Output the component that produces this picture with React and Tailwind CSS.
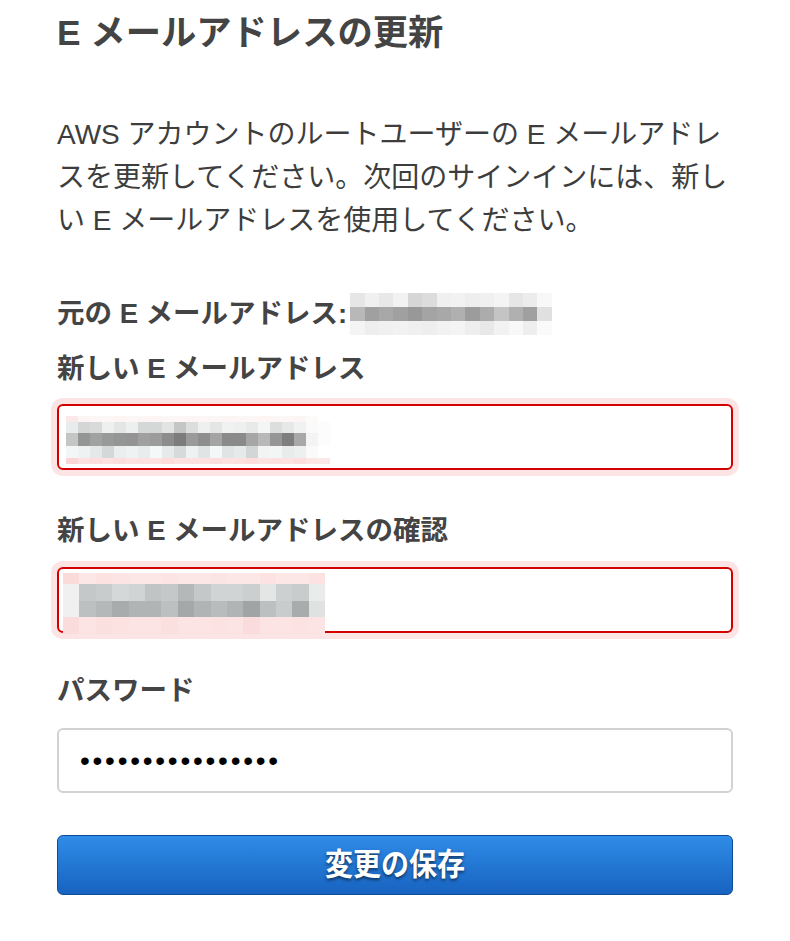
import { useState } from "react";

// pixelated stand-ins for the blurred addresses in the screenshot
const ORIG_ROWS = [
  ["#e6e6e6", "#f0f0f0", "#e8e8e8", "#f2f2f2", "#d6d6d6", "#dcdcdc", "#f0f0f0", "#f2f2f2", "#eeeeee", "#f0f0f0", "#f4f4f4", "#e6e6e6", "#ececec", "#f8f8f8"],
  ["#b8b8b8", "#a0a0a0", "#a8a8a8", "#a0a0a0", "#989898", "#a4a4a4", "#a8a8a8", "#b0b0b0", "#9c9c9c", "#acacac", "#c4c4c4", "#b0b0b0", "#a0a0a0", "#e0e0e0"],
  ["#f4f4f4", "#eeeeee", "#f0f0f0", "#f2f2f2", "#f0f0f0", "#eeeeee", "#f2f2f2", "#f4f4f4", "#eeeeee", "#e8e8e8", "#f2f2f2", "#f8f8f8", "#eeeeee", "#fafafa"],
];

const NEW_ROWS = [
  ["#fbe8e8", "#fdf4f4", "#fdf6f6", "#fdf6f6", "#fdf4f4", "#fdf6f6", "#fdf6f6", "#fdf4f4", "#fdf6f6", "#fdf6f6", "#fdf4f4", "#fdf6f6", "#fdf6f6", "#fdf4f4", "#fdf6f6", "#fdf6f6", "#fdf4f4", "#fdf6f6", "#fdf6f6", "#fdf4f4", "#fdfafa", "#ffffff"],
  ["#e8ecec", "#d4d6d6", "#d8dada", "#eef0f0", "#e4e6e6", "#eef0f0", "#d4d8d8", "#d6d8d8", "#e2e4e4", "#c4c6c6", "#dcdede", "#eef0f0", "#e4e6e6", "#f0f2f2", "#eef0f0", "#e8eaea", "#f4f6f6", "#dcdede", "#e6e8e8", "#f0f2f2", "#fafafa", "#fcfcfc"],
  ["#c4c6c6", "#949696", "#a0a2a2", "#989a9a", "#949696", "#949494", "#a0a0a0", "#9c9c9c", "#8c8c8c", "#7c7c7c", "#9a9a9a", "#8e8e8e", "#a4a4a4", "#8a8a8a", "#8a8a8a", "#a6a6a6", "#b8b8b8", "#969696", "#7e7e7e", "#a8a8a8", "#f4f4f4", "#fcfcfc"],
  ["#f2f6f6", "#eef2f2", "#e4e8e8", "#d4d8d8", "#eaeeee", "#eef2f2", "#e8ecec", "#f4f8f8", "#e6eaea", "#d6dada", "#eef2f2", "#e0e4e4", "#f4f8f8", "#e0e4e4", "#e6eaea", "#d2d6d6", "#f2f4f4", "#f4f6f6", "#e8ecec", "#eef0f0", "#fafafa", "#ffffff"],
  ["#fbd6d6", "#fde0e0", "#fddcdc", "#fde2e2", "#fddede", "#fde2e2", "#fde0e0", "#fde2e2", "#fddcdc", "#fde2e2", "#fde0e0", "#fde2e2", "#fddede", "#fde2e2", "#fde0e0", "#fddcdc", "#fde2e2", "#fde0e0", "#fde2e2", "#fddede", "#fde6e6", "#fde8e8"],
];

const CONFIRM_ROWS = [
  ["#fbdada", "#fde6e6", "#fde2e2", "#fde4e4", "#fde6e6", "#fde6e6", "#fde4e4", "#fde6e6", "#fde6e6", "#fde4e4", "#fde6e6", "#fde6e6", "#fde2e2", "#fde6e6", "#fde6e6", "#fde2e2"],
  ["#f0f0f0", "#c4c8c8", "#c8cccc", "#d4d8d8", "#d0d4d4", "#c0c4c4", "#c4c8c8", "#b4b8b8", "#c4c8c8", "#d0d4d4", "#d0d4d4", "#cccfcf", "#e4e6e6", "#ccd0d0", "#c8cccc", "#eaecec"],
  ["#f0f0f0", "#bcc0c0", "#b4b8b8", "#a8acac", "#b0b4b4", "#b0b4b4", "#bcc0c0", "#a4a8a8", "#b0b4b4", "#b8bcbc", "#b0b4b4", "#a0a4a4", "#bcc0c0", "#c8cccc", "#a8acac", "#e0e2e2"],
  ["#fbdcdc", "#fde4e4", "#fbe0e0", "#fde2e2", "#fde4e4", "#fde4e4", "#fbe0e0", "#fde4e4", "#fde4e4", "#fde2e2", "#fde4e4", "#fbdcdc", "#fde4e4", "#fde4e4", "#fde2e2", "#fde4e4"],
];

function Pixels({ rows, cell, heights }) {
  return (
    <div className="flex flex-col shrink-0">
      {rows.map((row, r) => (
        <div key={r} className="flex">
          {row.map((c, i) => (
            <div key={i} style={{ backgroundColor: c, width: cell, height: heights[r] }} />
          ))}
        </div>
      ))}
    </div>
  );
}

const Label = ({ children, className = "" }) => (
  <p className={`text-[27.5px] leading-[36px] font-bold text-[#444] ${className}`}>{children}</p>
);

export default function App() {
  const [pw, setPw] = useState("••••••••••••••••");

  return (
    <div
      className="min-h-screen bg-white px-[57px] text-[#444]"
      style={{ fontFamily: '"Liberation Sans", "Noto Sans CJK JP", sans-serif' }}
    >
      <h1 className="pt-[13px] text-[35.3px] leading-[40px] font-bold text-[#444]">E メールアドレスの更新</h1>

      <p className="mt-[60px] text-[28px] leading-[43px] text-[#3d3d3d]">
        AWS アカウントのルートユーザーの E メールアドレスを更新してください。次回のサインインには、新しい E メールアドレスを使用してください。
      </p>

      <div className="mt-[51px] flex items-center h-[42px]">
        <Label>元の E メールアドレス:</Label>
        <div className="ml-[3px]">
          <Pixels rows={ORIG_ROWS} cell="14.4px" heights={[14, 14, 14]} />
        </div>
      </div>

      <Label className="mt-[16px]">新しい E メールアドレス</Label>
      <div className="relative mt-[17px] h-[66px] rounded-[6px] border-2 border-[#d40000] bg-white shadow-[0_0_0_6px_#fde4e4]">
        <div className="absolute left-[7px] top-[10px]">
          <Pixels rows={NEW_ROWS} cell="12px" heights={[6, 11, 13, 12, 6]} />
        </div>
      </div>

      <Label className="mt-[43px]">新しい E メールアドレスの確認</Label>
      <div className="relative mt-[18px] h-[66px] rounded-[6px] border-2 border-[#d40000] bg-white shadow-[0_0_0_6px_#fde4e4]">
        <div className="absolute left-[4px] top-[4px]">
          <Pixels rows={CONFIRM_ROWS} cell="16.4px" heights={[11, 17, 16, 17]} />
        </div>
      </div>

      <Label className="mt-[40px]">パスワード</Label>
      <input
        type="text"
        value={pw}
        onChange={(e) => setPw(e.target.value)}
        className="mt-[19px] block w-full h-[65px] rounded-[6px] border-2 border-[#d2d2d2] bg-white px-[21px] text-[28px] tracking-[2.75px] text-black outline-none"
        style={{ fontFamily: '"Liberation Sans", sans-serif' }}
      />

      <button className="mt-[42px] w-full h-[60px] rounded-[6px] border border-[#0d4c98] bg-gradient-to-b from-[#2f8ce8] to-[#1863c0] text-[28px] leading-none font-bold text-white [text-shadow:0_2px_3px_rgba(0,0,0,0.55)]">
        <span className="inline-block scale-y-[1.1]">変更の保存</span>
      </button>
    </div>
  );
}
